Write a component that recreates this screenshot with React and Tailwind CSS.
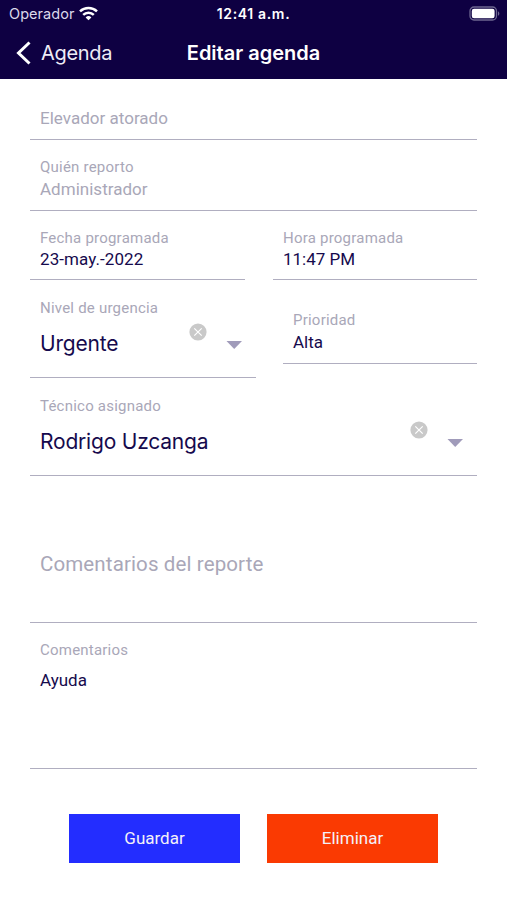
import React from 'react';

const Field = ({ label, children, className = '' }) => (
  <div className={`border-b border-[#b0aec0] pl-[10px] ${className}`}>
    {label && <p className="text-[15px] leading-5 tracking-[0.22px] text-[#a9a7b8]">{label}</p>}
    {children}
  </div>
);

const Value = ({ children, className = '' }) => (
  <p className={`text-[17px] leading-[22px] text-[#160a4d] ${className}`}>{children}</p>
);

const Select = ({ label, value, className = '' }) => (
  <Field label={label} className={`h-[98px] pt-[18px] ${className}`}>
    <div className="mt-[6px] flex items-start">
      <span className="mt-[6px] flex-1 font-['Inter',sans-serif] text-[21px] leading-7 tracking-[-0.2px] text-[#160a4d]">
        {value}
      </span>
      <svg className="mr-[19px] h-[18px] w-[18px] -mt-px" viewBox="0 0 18 18" fill="none">
        <circle cx="9" cy="9" r="8.6" fill="#c9c9c9" />
        <path d="M5.3 5.3l7.4 7.4M12.7 5.3l-7.4 7.4" stroke="#fff" strokeWidth="1.2" />
      </svg>
      <svg className="mr-[14px] mt-[17px] h-2 w-4" viewBox="0 0 16 8">
        <path d="M0.5 0h15.5L8.2 8z" fill="#a09bba" />
      </svg>
    </div>
  </Field>
);

const Header = () => (
  <header className="h-[79px] bg-[#0e0042] font-['Inter',sans-serif] text-white">
    <div className="grid h-[27px] grid-cols-3 items-center pl-[7px] pr-[7px]">
      <div className="flex items-center gap-[5px] pl-[2px]">
        <span className="text-[14.5px] leading-5 tracking-[0.05px] text-[#dcd9ea]">Operador</span>
        <svg className="h-[15px] w-[19px]" viewBox="0 0 19 15" fill="none" stroke="#fff" strokeWidth="2.5">
          <path d="M1 5.3a12.3 12.3 0 0 1 17 0" />
          <path d="M4.2 8.8a7.6 7.6 0 0 1 10.6 0" />
          <path d="M9.5 14.2L6.6 11.4a4.2 4.2 0 0 1 5.8 0z" fill="#fff" stroke="none" />
        </svg>
      </div>
      <span className="text-center text-[14px] font-semibold leading-5 tracking-[0.65px]">12:41 a.m.</span>
      <svg className="h-[15px] w-[31px] justify-self-end" viewBox="0 0 31 15" fill="none">
        <rect x="1" y="1" width="26.5" height="13" rx="4" stroke="#6d6690" strokeWidth="1.3" />
        <rect x="2.8" y="2.8" width="22.8" height="9.4" rx="2.2" fill="#fff" />
        <path d="M29 5.2c1.8.8 1.8 3.8 0 4.6z" fill="#6d6690" />
      </svg>
    </div>
    <div className="grid h-[51px] grid-cols-3 items-center">
      <div className="flex items-center gap-[10px] pl-[16px]">
        <svg className="h-6 w-[15px]" viewBox="0 0 15 24" fill="none" stroke="#fff" strokeWidth="3">
          <path d="M13.5 1.5L2.5 12l11 10.5" />
        </svg>
        <span className="pt-px text-[20px] tracking-[-0.3px] text-[#eeecf6]">Agenda</span>
      </div>
      <h1 className="whitespace-nowrap pt-px text-center text-[20px] font-semibold">Editar agenda</h1>
    </div>
  </header>
);

const App = () => (
  <div className="h-[900px] w-[507px] overflow-hidden bg-white font-['Roboto',sans-serif]">
    <Header />
    <main className="pl-[30px] pr-[30px]">
      <Field className="h-[61px] pt-[28px]">
        <Value className="tracking-[0.02px] text-[#a9a7b8]!">Elevador atorado</Value>
      </Field>
      <Field label="Quién reporto" className="h-[71px] pt-[17px]">
        <Value className="mt-px tracking-[0.02px] text-[#a9a7b8]!">Administrador</Value>
      </Field>
      <div className="flex gap-7">
        <Field label="Fecha programada" className="h-[69px] w-[215px] pt-[17px]">
          <Value className="tracking-[0.08px]">23-may.-2022</Value>
        </Field>
        <Field label="Hora programada" className="h-[69px] flex-1 pt-[17px]">
          <Value>11:47 PM</Value>
        </Field>
      </div>
      <div className="flex gap-[27px]">
        <Select label="Nivel de urgencia" value="Urgente" className="w-[226px]" />
        <Field label="Prioridad" className="h-[84px] flex-1 pt-[30px]">
          <Value className="mt-px">Alta</Value>
        </Field>
      </div>
      <Select label="Técnico asignado" value="Rodrigo Uzcanga" />
      <Field className="h-[147px] pt-[74px]">
        <p className="text-[20.5px] leading-7 tracking-[0.12px] text-[#a9a7b8]">Comentarios del reporte</p>
      </Field>
      <Field label="Comentarios" className="h-[146px] pt-[17px]">
        <Value className="mt-[9px]">Ayuda</Value>
      </Field>
      <div className="mt-[45px] flex justify-center gap-[27px] text-[17px] text-[#f4f1f8]">
        <button className="h-[49px] w-[171px] bg-[#232dff] pt-px">Guardar</button>
        <button className="h-[49px] w-[171px] bg-[#fa3a02] pt-px">Eliminar</button>
      </div>
    </main>
  </div>
);

export default App;
